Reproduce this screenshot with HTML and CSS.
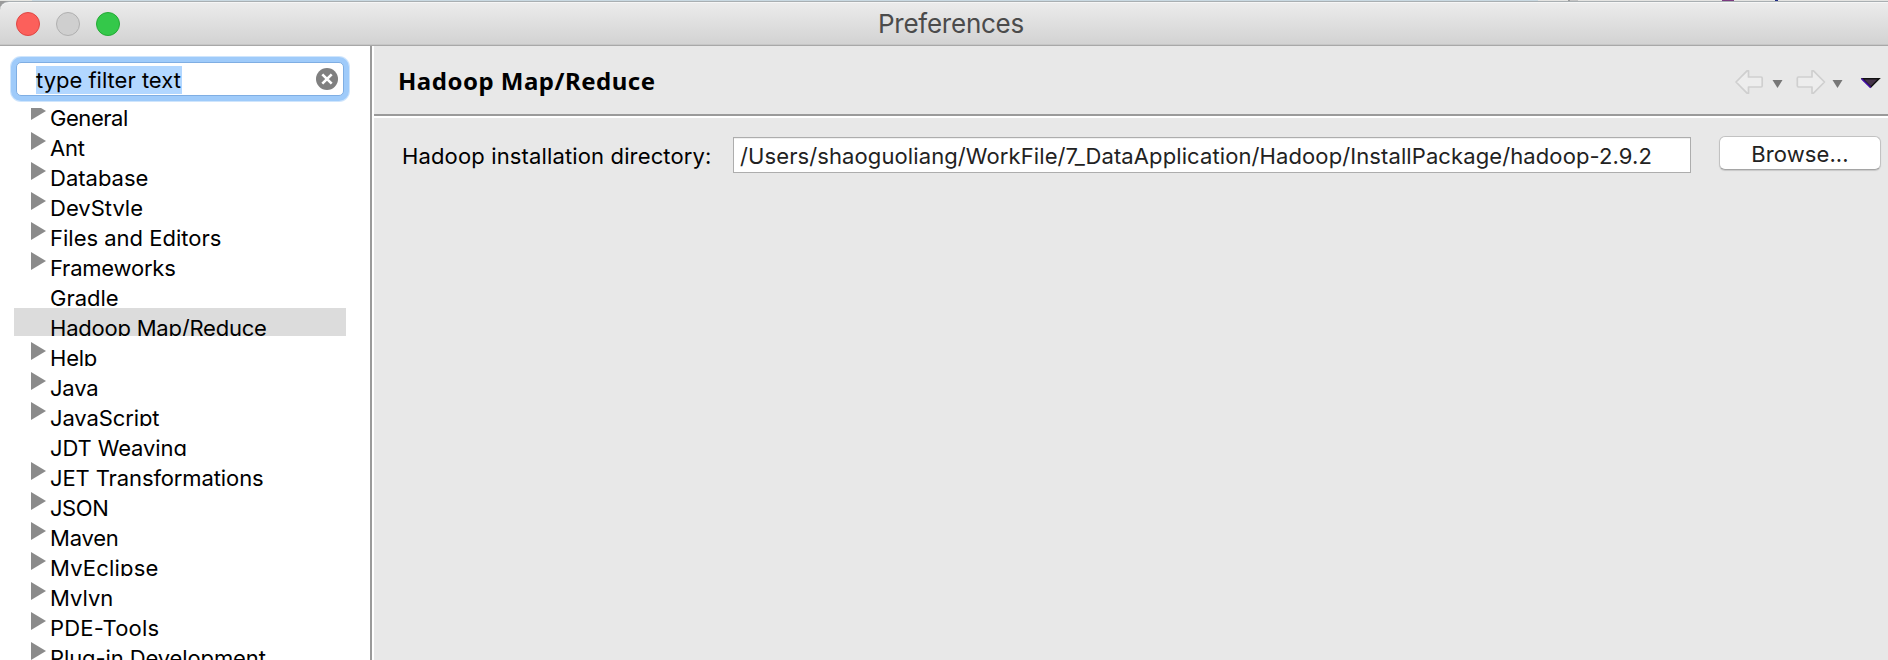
FILE: index.html
```
<!DOCTYPE html>
<html lang="en">
<head>
<meta charset="utf-8">
<title>Preferences</title>
<link rel="stylesheet" href="styles.css">
</head>
<body>
<div class="backdrop"><i class="b1"></i><i class="b2"></i><i class="b3"></i><i class="b4"></i></div>
<div class="window">
  <header class="titlebar">
    <div class="lights"><span class="light close"></span><span class="light minimize"></span><span class="light zoom"></span></div>
    <h1 class="title">Preferences</h1>
  </header>
  <div class="content">
    <aside class="sidebar">
      <div class="filter">
        <span class="filter-text">type filter text</span>
        <svg class="clear" width="22" height="22" viewBox="0 0 22 22"><circle cx="11" cy="11" r="11" fill="#808080"/><path d="M6.300 6.300l9.400 9.400M15.700 6.300l-9.400 9.400" stroke="#fff" stroke-width="2.600"/></svg>
      </div>
      <div class="tree-view">
        <ul class="tree">
          <li class="parent"><span class="ls-a">General</span></li>
          <li class="parent"><span class="ls-b">Ant</span></li>
          <li class="parent"><span>Database</span></li>
          <li class="parent"><span>DevStyle</span></li>
          <li class="parent"><span>Files and Editors</span></li>
          <li class="parent"><span class="ls-b">Frameworks</span></li>
          <li><span>Gradle</span></li>
          <li class="selected"><span class="ls-b">Hadoop Map/Reduce</span></li>
          <li class="parent"><span class="ls-b">Help</span></li>
          <li class="parent"><span class="ls-b">Java</span></li>
          <li class="parent"><span class="ls-c">JavaScript</span></li>
          <li><span class="ls-c">JDT Weaving</span></li>
          <li class="parent"><span class="ls-c">JET Transformations</span></li>
          <li class="parent"><span class="ls-a">JSON</span></li>
          <li class="parent"><span class="ls-b">Maven</span></li>
          <li class="parent"><span class="ls-d">MyEclipse</span></li>
          <li class="parent"><span>Mylyn</span></li>
          <li class="parent"><span class="ls-d">PDE-Tools</span></li>
          <li class="parent"><span class="ls-c">Plug-in Development</span></li>
        </ul>
      </div>
    </aside>
    <main class="page">
      <div class="page-head">
        <h2 class="page-title">Hadoop Map/Reduce</h2>
        <div class="nav">
          <svg width="148" height="28" viewBox="0 0 148 28">
            <g fill="#ededed" stroke="#cfcfcf" stroke-width="1.7" stroke-linejoin="round">
              <path d="M2 14L13 2.800h1.500V9H27q1.200 0 1.200 1.200v7.600Q28.200 19 27 19H14.500v6.200H13z"/>
              <path d="M90.500 14L79.500 2.800H78V9H64.500q-1.200 0-1.200 1.200v7.600q0 1.200 1.200 1.200H78v6.200h1.500z"/>
            </g>
            <path d="M38.500 12h10l-5 8zM98.500 12h10l-5 8z" fill="#777"/>
            <path d="M128.500 10.800h16.500l-8.200 8.200z" fill="#46344a" stroke="#111" stroke-width="1.500"/>
            <path d="M127.500 10.600l9.200 9" stroke="#4510a5" stroke-width="1.500"/>
          </svg>
        </div>
      </div>
      <div class="form-row">
        <label class="label">Hadoop installation directory:</label>
        <div class="path-field">/Users/shaoguoliang/WorkFile/7_DataApplication/Hadoop/InstallPackage/hadoop-2.9.2</div>
        <div class="button">Browse...</div>
      </div>
    </main>
  </div>
</div>
</body>
</html>
```
FILE: styles.css
```
* { box-sizing: border-box; }
body {
  margin: 0; width: 1888px; height: 660px; overflow: hidden;
  display: flex; flex-direction: column;
  background: #9a9a9a; color: #000;
  font: 22px/26px Inter, "Liberation Sans", sans-serif;
}
.backdrop { height: 1px; flex: none; display: flex; background: #e4e4e2; }
.b1 { width: 1538px; background: linear-gradient(90deg, #e6e6e2 32px, #c9d9e2 32px); }
.b2 { width: 40px; margin-left: 30px; background: linear-gradient(90deg, #9b9b9b 2px, #c5c5c5 2px 10px, transparent 10px); }
.b3 { width: 12px; margin-left: 114px; background: #7b3a80; }
.b4 { width: 3px; margin-left: 41px; background: #1e2a86; }
.window { flex: 1; min-height: 0; display: flex; flex-direction: column; }
.titlebar {
  height: 45px; flex: none; display: grid; grid-template-columns: 1fr auto 1fr; align-items: start;
  padding: 0 2px 0 16px;
  background: linear-gradient(#ececec, #d2d2d2);
  border-top: 1px solid #a9afb2; border-bottom: 1px solid #a8a8a8;
  box-shadow: inset 0 1px #f6f6f6, inset 0 -1px #c6c6c6;
  border-radius: 9px 0 0 0;
}
.lights { display: flex; gap: 16px; padding-top: 10px; }
.light { width: 24px; height: 24px; border-radius: 50%; border: 1px solid; }
.close { background: #fc605b; border-color: #df4744; }
.minimize { background: #cfcfcf; border-color: #b0b0b0; }
.zoom { background: #34c84a; border-color: #24aa35; }
.title { margin: 6px 0 0; font-size: 26px; line-height: 32px; font-weight: 400; letter-spacing: -.25px; color: #4b4b4b; }
.content { flex: 1; min-height: 0; display: flex; }
.sidebar {
  width: 374px; flex: none; display: flex; flex-direction: column; background: #fff;
  padding: 16px 0 0 14px; border-right: 2px solid #fff; box-shadow: inset -2px 0 #9a9a9a;
}
.filter {
  width: 328px; height: 34px; margin-left: 2px; flex: none;
  display: flex; align-items: center; justify-content: space-between;
  padding: 0 5px 0 19px; border: 1px solid #7faee3; border-radius: 5px; background: #fff;
  box-shadow: 0 0 0 5px #9fcbfa, 0 0 0 6px #cfe5fc;
}
.filter-text { height: 28px; width: 146px; margin-top: 1px; line-height: 28px; background: #b2d7ff; white-space: nowrap; }
.tree-view { flex: 1; min-height: 0; margin-top: 12px; overflow: hidden; }
.tree { list-style: none; margin: -10px 0 0; padding: 0; }
.tree li {
  width: 332px; height: 28px; margin-bottom: 2px; padding-left: 17px; overflow: hidden;
  display: flex; align-items: flex-start; line-height: 40px; white-space: nowrap;
}
.tree li::before { content: ""; width: 15px; height: 18px; margin: 4px 4px 0 0; flex: none; }
.tree .parent::before { background: #8b8b8b; clip-path: polygon(0 0, 100% 50%, 0 100%); }
.tree .selected { background: #dcdcdc; }
.tree .ls-a { letter-spacing: -.45px; }
.tree .ls-b { letter-spacing: -.22px; }
.tree .ls-c { letter-spacing: -.11px; }
.tree .ls-d { letter-spacing: .2px; }
.page { flex: 1; min-width: 0; background: #e8e8e8; }
.page-head {
  height: 72px; display: flex; align-items: center; justify-content: space-between;
  padding: 0 6px 4px 24px; border-bottom: 2px solid #fff; box-shadow: inset 0 -2px #9a9a9a;
}
.page-title { margin: 4px 0 0; font: bold 24px/32px "Noto Sans", sans-serif; letter-spacing: .5px; }
.nav { display: flex; margin-top: 5px; }
.form-row { display: flex; align-items: flex-start; padding: 19px 7px 0 28px; white-space: nowrap; }
.label { width: 331px; line-height: 38px; letter-spacing: .14px; }
.path-field {
  width: 958px; height: 36px; padding-left: 6px; line-height: 36px; letter-spacing: .1px;
  color: #222; background: #fff; border: 1px solid #adadad; box-shadow: inset 0 1px #f0f0f0;
}
.button {
  width: 162px; height: 34px; margin: -1px 0 0 28px; text-align: center; line-height: 34px; letter-spacing: .1px;
  color: #222; background: #fff; border: 1px solid #c2c2c2; border-bottom-color: #a5a5a5; border-radius: 6px;
  box-shadow: 0 1px 1px #c8c8c8;
}
```
